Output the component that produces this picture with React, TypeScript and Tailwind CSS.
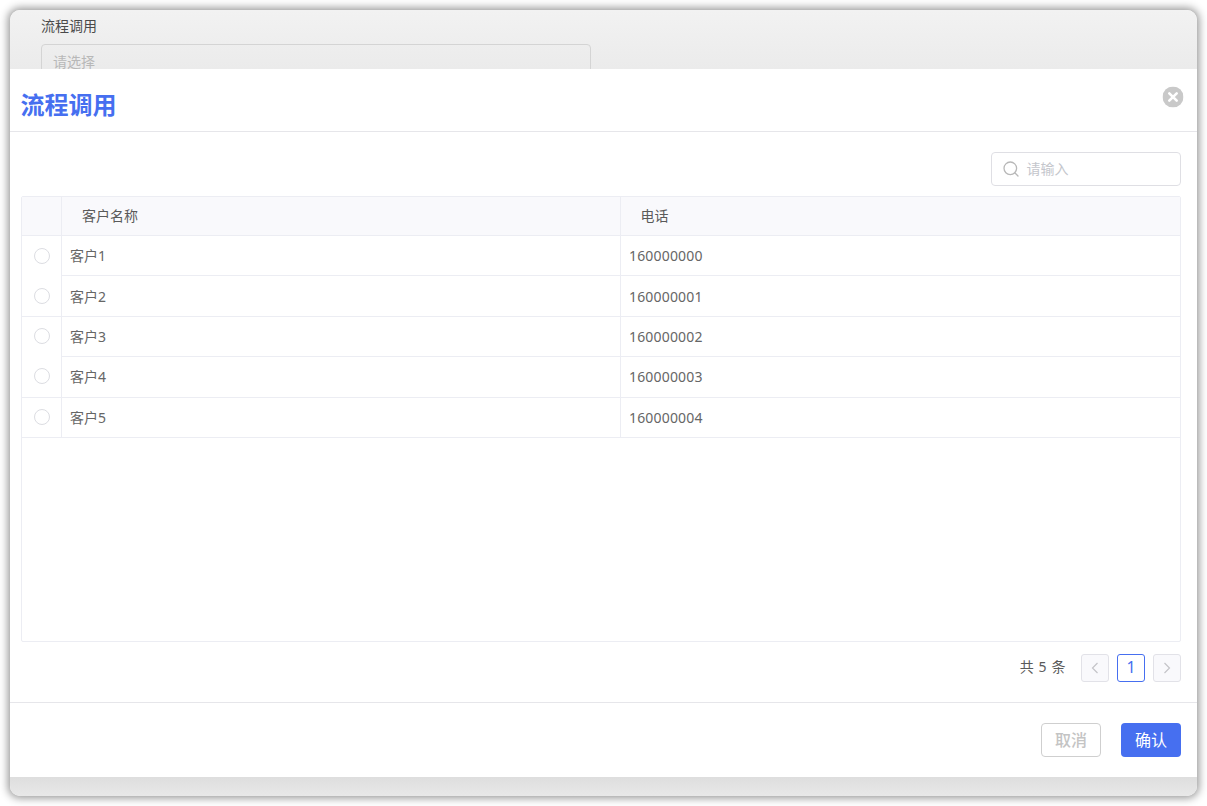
const customers = [
  { name: "客户1", phone: "160000000", radioLine: true },
  { name: "客户2", phone: "160000001", radioLine: false },
  { name: "客户3", phone: "160000002", radioLine: true },
  { name: "客户4", phone: "160000003", radioLine: false },
  { name: "客户5", phone: "160000004", radioLine: true },
];

const font = "font-['Noto_Sans','Noto_Sans_CJK_SC',sans-serif]";

export default function App() {
  return (
    <div className={`h-[806px] w-[1207px] overflow-hidden bg-white p-[10px] ${font}`}>
      <div className="flex h-[786px] flex-col overflow-hidden rounded-[10px] bg-white shadow-[0_0_9px_2px_rgba(0,0,0,0.42)]">
        {/* form behind the dialog */}
        <div className="h-[59px] shrink-0 overflow-hidden bg-gradient-to-b from-[#f2f2f2] to-[#ebebeb] pl-[31px] pt-[6px]">
          <div className="text-[14px] leading-[20px] text-[#4a4a4a]">流程调用</div>
          <div className="mt-[8px] h-[36px] w-[550px] rounded-[4px] border border-[#d4d4d4] pl-[11px] pt-[6px] text-[14px] leading-[22px] text-[#b8b8b8]">
            请选择
          </div>
        </div>

        {/* dialog */}
        <div className="flex h-[708px] shrink-0 flex-col bg-white">
          <div className="flex h-[63px] shrink-0 items-start justify-between border-b border-[#e6e6ea] pl-[10.5px] pr-[13px]">
            <h1 className="mt-[19px] text-[24px] font-bold leading-[34px] text-[#466ff0]">流程调用</h1>
            <button className="mt-[17px] h-[21px] w-[21px] translate-y-[0.5px] -translate-x-[0.5px]">
              <svg viewBox="0 0 21 21" className="h-[21px] w-[21px]">
                <circle cx="10.5" cy="10.5" r="10.5" fill="#c9c9c9" />
                <path d="M6.8 6.8l7.4 7.4M14.2 6.8l-7.4 7.4" stroke="#fff" strokeWidth="2.6" strokeLinecap="round" />
              </svg>
            </button>
          </div>

          <div className="flex flex-1 flex-col pl-[11px] pr-[16px]">
            <div className="mt-[20px] flex justify-end">
              <div className="flex h-[34px] w-[190px] items-center rounded-[4px] border border-[#dfdfe4] pl-[11px] text-[14px] text-[#c4c6cc]">
                <svg viewBox="0 0 16 16" fill="none" stroke="#b8b8b8" strokeWidth="1.3" className="h-[16px] w-[16px]">
                  <circle cx="7.3" cy="7.3" r="6.3" />
                  <path d="M12 12l3 3" strokeLinecap="round" />
                </svg>
                <span className="ml-[8px] -translate-x-[0.5px] pb-[2px]">请输入</span>
              </div>
            </div>

            <div className="mt-[10px] h-[446px] rounded-[2px] border border-[#ecedf3] text-[14px] text-[#666]">
              <div className="flex h-[38px] bg-[#f9f9fc] text-[#5a5a5a]">
                <div className="w-[40px] shrink-0 border-r border-[#ecedf3]" />
                <div className="w-[559px] shrink-0 border-r border-[#ecedf3] pl-[20px] leading-[38px]">客户名称</div>
                <div className="flex-1 pl-[19.5px] leading-[38px]">电话</div>
              </div>
              {customers.map((c) => (
                <div key={c.name} className="flex h-[40.4px]">
                  <div className={`flex w-[40px] shrink-0 items-center justify-center border-r border-[#ecedf3] ${c.radioLine ? "border-t" : ""}`}>
                    <span className="h-[16px] w-[16px] rounded-full border border-[#dcdde2] bg-white" />
                  </div>
                  <div className="flex w-[559px] shrink-0 items-center border-r border-t border-[#ecedf3] pl-[8px]">{c.name}</div>
                  <div className="flex flex-1 items-center border-t border-[#ecedf3] pl-[8px] tracking-[0.17px]">{c.phone}</div>
                </div>
              ))}
              <div className="border-t border-[#ecedf3]" />
            </div>

            <div className="mt-[12px] flex items-center justify-end text-[14px] text-[#5a5a5a]">
              <span className="mr-[15px] pb-[3px] tracking-[0.6px]">共 5 条</span>
              <span className="flex h-[28px] w-[28px] items-center justify-center rounded-[3px] border border-[#e2e2e8] bg-[#f9f9fc]">
                <svg viewBox="0 0 10 12" fill="none" stroke="#c4c4c8" strokeWidth="1.2" className="h-[12px] w-[10px]">
                  <path d="M7.5 1L2.5 6l5 5" />
                </svg>
              </span>
              <span className="ml-[8px] flex h-[28px] w-[28px] items-center justify-center rounded-[3px] border border-[#466ff0] pb-[2px] text-[16px] text-[#466ff0]">1</span>
              <span className="ml-[8px] flex h-[28px] w-[28px] items-center justify-center rounded-[3px] border border-[#e2e2e8] bg-[#f9f9fc]">
                <svg viewBox="0 0 10 12" fill="none" stroke="#c4c4c8" strokeWidth="1.2" className="h-[12px] w-[10px]">
                  <path d="M2.5 1l5 5-5 5" />
                </svg>
              </span>
            </div>
          </div>

          <div className="flex h-[75px] shrink-0 items-start justify-end gap-[20px] border-t border-[#e6e6ea] pr-[16px] pt-[20px] text-[16px]">
            <button className="h-[34px] w-[60px] rounded-[4px] border border-[#cfcfcf] font-medium text-[#c4c4c4]">取消</button>
            <button className="h-[34px] w-[60px] rounded-[4px] bg-[#466ff0] text-white">确认</button>
          </div>
        </div>

        <div className="flex-1 bg-gradient-to-b from-[#dedede] to-[#e8e8e8]" />
      </div>
    </div>
  );
}
